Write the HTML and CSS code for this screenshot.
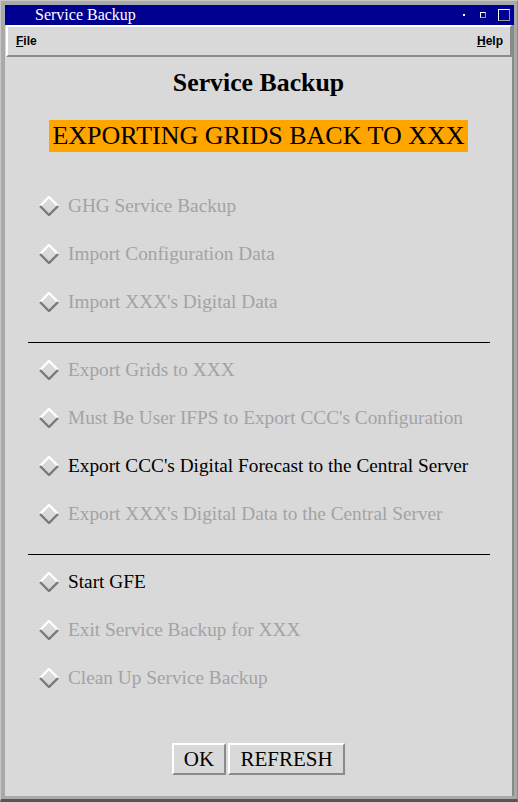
FILE: index.html
```html
<!DOCTYPE html>
<html>
<head>
<meta charset="utf-8">
<title>Service Backup</title>
<link rel="stylesheet" href="styles.css">
</head>
<body>
<div class="frame">
  <div class="titlebar">
    <span class="title">Service Backup</span>
    <span class="tb-icons">
      <span class="tb-dot"></span>
      <span class="tb-min"></span>
      <span class="tb-max"></span>
    </span>
  </div>
  <div class="client">
    <div class="menubar">
      <span class="menu"><u>F</u>ile</span>
      <span class="menu"><u>H</u>elp</span>
    </div>
    <h1 class="heading">Service Backup</h1>
    <div class="banner-wrap"><div class="banner">EXPORTING GRIDS BACK TO XXX</div></div>
    <div class="list">
      <div class="row disabled"><svg class="dia" viewBox="0 0 20 20" width="20" height="20"><polyline points="1,10 10,1 19,10" class="hi"/><polyline points="1,10 10,19 19,10" class="lo"/></svg><span>GHG Service Backup</span></div>
      <div class="row disabled"><svg class="dia" viewBox="0 0 20 20" width="20" height="20"><polyline points="1,10 10,1 19,10" class="hi"/><polyline points="1,10 10,19 19,10" class="lo"/></svg><span>Import Configuration Data</span></div>
      <div class="row disabled"><svg class="dia" viewBox="0 0 20 20" width="20" height="20"><polyline points="1,10 10,1 19,10" class="hi"/><polyline points="1,10 10,19 19,10" class="lo"/></svg><span>Import XXX's Digital Data</span></div>
      <div class="sep"></div>
      <div class="row disabled"><svg class="dia" viewBox="0 0 20 20" width="20" height="20"><polyline points="1,10 10,1 19,10" class="hi"/><polyline points="1,10 10,19 19,10" class="lo"/></svg><span>Export Grids to XXX</span></div>
      <div class="row disabled"><svg class="dia" viewBox="0 0 20 20" width="20" height="20"><polyline points="1,10 10,1 19,10" class="hi"/><polyline points="1,10 10,19 19,10" class="lo"/></svg><span>Must Be User IFPS to Export CCC's Configuration</span></div>
      <div class="row"><svg class="dia" viewBox="0 0 20 20" width="20" height="20"><polyline points="1,10 10,1 19,10" class="hi"/><polyline points="1,10 10,19 19,10" class="lo"/></svg><span>Export CCC's Digital Forecast to the Central Server</span></div>
      <div class="row disabled"><svg class="dia" viewBox="0 0 20 20" width="20" height="20"><polyline points="1,10 10,1 19,10" class="hi"/><polyline points="1,10 10,19 19,10" class="lo"/></svg><span>Export XXX's Digital Data to the Central Server</span></div>
      <div class="sep"></div>
      <div class="row"><svg class="dia" viewBox="0 0 20 20" width="20" height="20"><polyline points="1,10 10,1 19,10" class="hi"/><polyline points="1,10 10,19 19,10" class="lo"/></svg><span>Start GFE</span></div>
      <div class="row disabled"><svg class="dia" viewBox="0 0 20 20" width="20" height="20"><polyline points="1,10 10,1 19,10" class="hi"/><polyline points="1,10 10,19 19,10" class="lo"/></svg><span>Exit Service Backup for XXX</span></div>
      <div class="row disabled"><svg class="dia" viewBox="0 0 20 20" width="20" height="20"><polyline points="1,10 10,1 19,10" class="hi"/><polyline points="1,10 10,19 19,10" class="lo"/></svg><span>Clean Up Service Backup</span></div>
    </div>
    <div class="buttons">
      <button class="btn btn-ok">OK</button>
      <button class="btn btn-refresh">REFRESH</button>
    </div>
  </div>
</div>
</body>
</html>
```
FILE: styles.css
```css
html, body {
  margin: 0;
  padding: 0;
  background: #a9a9a9;
}
.frame {
  width: 518px;
  height: 802px;
  box-sizing: border-box;
  background: #a9a9a9;
  border-top: 1px solid #c8c8c8;
  border-left: 1px solid #c8c8c8;
  border-right: 1px solid #8a8a8a;
  border-bottom: 3px solid #555555;
  padding: 4px 3px 3px 4px;
  display: flex;
  flex-direction: column;
}
.titlebar {
  height: 20px;
  background: #000090;
  display: flex;
  align-items: center;
  justify-content: space-between;
  flex: none;
}
.title {
  color: #ffffff;
  font-family: "Liberation Serif", serif;
  font-size: 16px;
  line-height: 20px;
  padding-left: 30px;
}
.tb-icons {
  display: flex;
  align-items: center;
  padding-right: 4px;
}
.tb-dot {
  width: 2px;
  height: 2px;
  background: #ffffff;
  margin-right: 15px;
}
.tb-min {
  width: 4px;
  height: 4px;
  border-top: 1px solid #ffffff;
  border-left: 1px solid #ffffff;
  border-right: 1px solid #9a9a9a;
  border-bottom: 1px solid #9a9a9a;
  margin-right: 12px;
}
.tb-max {
  width: 10px;
  height: 10px;
  border-top: 1px solid #ffffff;
  border-left: 1px solid #ffffff;
  border-right: 1px solid #9a9a9a;
  border-bottom: 1px solid #9a9a9a;
}
.client {
  flex: 1;
  background: #d9d9d9;
  border-right: 2px solid #8a8a8a;
  display: flex;
  flex-direction: column;
  font-family: "Liberation Serif", serif;
}
.menubar {
  height: 28px;
  margin-left: 1px;
  border-top: 2px solid #ffffff;
  border-left: 2px solid #ffffff;
  border-right: 2px solid #8a8a8a;
  border-bottom: 2px solid #8a8a8a;
  display: flex;
  align-items: center;
  justify-content: space-between;
  padding: 0 7px 0 8px;
}
.menu {
  font-family: "Liberation Sans", sans-serif;
  font-weight: bold;
  font-size: 12px;
  color: #000000;
}
.heading {
  margin: 11px 0 0 0;
  font-size: 25.8px;
  line-height: 30px;
  font-weight: bold;
  text-align: center;
  color: #000000;
}
.banner-wrap {
  display: flex;
  justify-content: center;
  margin-top: 22px;
}
.banner {
  background: #ffa500;
  color: #000000;
  font-size: 26px;
  line-height: 32px;
  padding: 0 3px;
}
.list {
  margin-top: 30px;
  display: flex;
  flex-direction: column;
}
.row {
  height: 48px;
  display: flex;
  align-items: center;
  padding-left: 34px;
  gap: 9px;
  font-size: 19.3px;
  color: #000000;
}
.row.disabled {
  color: #a3a3a3;
}
.dia {
  flex: none;
}
.dia polyline {
  fill: none;
  stroke-width: 2.4;
}
.dia .hi {
  stroke: #ffffff;
}
.dia .lo {
  stroke: #7a7a7a;
}
.sep {
  height: 1px;
  background: #000000;
  margin: 16px 22px 3px 23px;
}
.buttons {
  margin-top: 41px;
  display: flex;
  justify-content: center;
  gap: 2px;
}
.btn {
  font-family: "Liberation Serif", serif;
  font-size: 21px;
  height: 32px;
  box-sizing: border-box;
  background: #d9d9d9;
  color: #000000;
  border-top: 2px solid #ffffff;
  border-left: 2px solid #ffffff;
  border-right: 2px solid #8a8a8a;
  border-bottom: 2px solid #8a8a8a;
  margin: 0;
  line-height: 28px;
}
.btn-ok {
  width: 54px;
  padding: 0;
}
.btn-refresh {
  width: 117px;
  padding: 0;
}
```
